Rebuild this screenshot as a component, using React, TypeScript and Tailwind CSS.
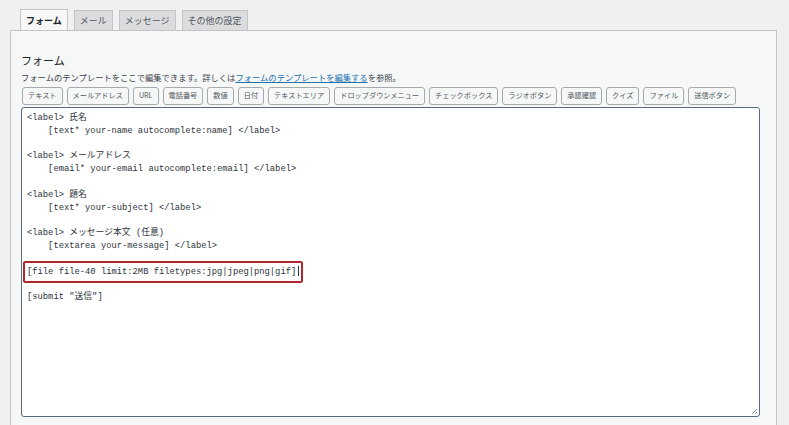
const tabs = ["フォーム", "メール", "メッセージ", "その他の設定"];

const tagButtons = [
  "テキスト",
  "メールアドレス",
  "URL",
  "電話番号",
  "数値",
  "日付",
  "テキストエリア",
  "ドロップダウンメニュー",
  "チェックボックス",
  "ラジオボタン",
  "承認確認",
  "クイズ",
  "ファイル",
  "送信ボタン",
];

const codeLines = [
  "<label> 氏名",
  "    [text* your-name autocomplete:name] </label>",
  "",
  "<label> メールアドレス",
  "    [email* your-email autocomplete:email] </label>",
  "",
  "<label> 題名",
  "    [text* your-subject] </label>",
  "",
  "<label> メッセージ本文 (任意)",
  "    [textarea your-message] </label>",
  "",
  "[file file-40 limit:2MB filetypes:jpg|jpeg|png|gif]",
  "",
  '[submit "送信"]',
];

const App = () => {
  return (
    <div className="w-[789px] h-[425px] overflow-hidden bg-[#f0f0f1] pt-[10px] font-['Noto_Sans_CJK_JP',sans-serif]">
      {/* tabs */}
      <div className="flex items-end gap-[6px] pl-[20px] h-[20px]">
        {tabs.map((tab, i) =>
          i === 0 ? (
            <div
              key={tab}
              className="relative z-10 h-[21px] px-[5px] flex items-center border border-b-0 border-[#c3c4c7] bg-[#f6f7f7] text-[9px] font-bold text-[#1d2327] leading-none"
            >
              {tab}
            </div>
          ) : (
            <div
              key={tab}
              className="h-[20px] px-[5px] flex items-center border border-b-0 border-[#c3c4c7] bg-[#dcdcde] text-[9px] text-[#50575e] leading-none"
            >
              {tab}
            </div>
          )
        )}
      </div>

      {/* panel */}
      <div className="ml-[10px] w-[767px] h-[400px] border border-[#c3c4c7] bg-[#f6f7f7] pl-[10px] pt-[22px]">
        <h2 className="text-[11px] leading-[14px] text-[#1d2327]">フォーム</h2>
        <p className="mt-[5px] text-[8.3px] leading-[10px] text-[#3c434a]">
          フォームのテンプレートをここで編集できます。詳しくは
          <span className="text-[#2271b1] underline">フォームのテンプレートを編集する</span>
          を参照。
        </p>

        {/* tag generator buttons */}
        <div className="mt-[5px] flex gap-[4px] pl-[1px]">
          {tagButtons.map((b) => (
            <div
              key={b}
              className="h-[18px] px-[5px] flex items-center border border-[#a7aaad] rounded-[3px] bg-[#f6f7f7] text-[7.2px] text-[#50575e] leading-none whitespace-nowrap"
            >
              {b}
            </div>
          ))}
        </div>

        {/* textarea */}
        <div className="relative mt-[2px] w-[739px] h-[310px] border border-[#5b6a82] rounded-[3px] bg-white pl-[5px] pt-[4px]">
          <div className="font-['Liberation_Mono','Noto_Sans_CJK_JP',monospace] text-[8.8px] leading-[12.8px] text-[#2c3338] whitespace-pre">
            {codeLines.map((line, i) => (
              <div key={i} className="h-[12.8px]">
                {line}
                {i === 12 && (
                  <span className="inline-block w-px h-[10px] bg-[#2c3338] align-middle ml-[2px]" />
                )}
              </div>
            ))}
          </div>

          {/* highlight annotation */}
          <div className="absolute left-[1px] top-[153px] w-[280px] h-[22px] border-2 border-[#b0272c] rounded-[2px]" />

          {/* resize handle */}
          <svg
            className="absolute right-[1px] bottom-[1px]"
            width="8"
            height="8"
            viewBox="0 0 8 8"
          >
            <path d="M7 2 L2 7 M7 5 L5 7" stroke="#8c8f94" strokeWidth="1" fill="none" />
          </svg>
        </div>
      </div>
    </div>
  );
};

export default App;
